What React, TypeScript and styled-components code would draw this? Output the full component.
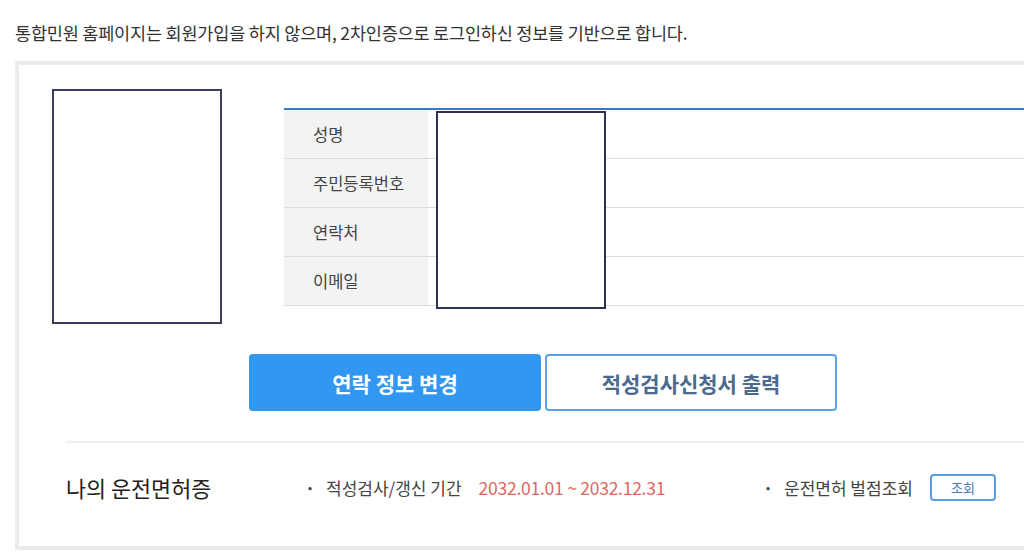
import styled, { createGlobalStyle } from 'styled-components'

const GlobalStyle = createGlobalStyle`
  html, body {
    margin: 0;
    padding: 0;
    background: #ffffff;
    font-family: 'Noto Sans CJK KR', 'Noto Sans', sans-serif;
  }
`

const rows = ['성명', '주민등록번호', '연락처', '이메일']

export default function App() {
  return (
    <>
      <GlobalStyle />
      <Page>
        <Notice>
          통합민원 홈페이지는 회원가입을 하지 않으며, 2차인증으로 로그인하신 정보를 기반으로 합니다.
        </Notice>
        <Card>
          <TopRow>
            <Photo />
            <InfoTable>
              {rows.map((label) => (
                <Row key={label}>
                  <Label>{label}</Label>
                  <Value />
                </Row>
              ))}
              <Redaction />
            </InfoTable>
          </TopRow>
          <Buttons>
            <Button primary>연락 정보 변경</Button>
            <Button>적성검사신청서 출력</Button>
          </Buttons>
          <License>
            <LicenseTitle>나의 운전면허증</LicenseTitle>
            <Item width={458}>
              <Dot>·</Dot>
              적성검사/갱신 기간
              <Period>2032.01.01 ~ 2032.12.31</Period>
            </Item>
            <Item>
              <Dot>·</Dot>
              운전면허 벌점조회
              <SmallButton>조회</SmallButton>
            </Item>
          </License>
        </Card>
      </Page>
    </>
  )
}

const Page = styled.div`
  width: 1024px;
  height: 556px;
  overflow: hidden;
  padding-left: 15px;
  box-sizing: border-box;
`

const Notice = styled.p`
  margin: 0;
  padding-top: 21px;
  height: 61px;
  box-sizing: border-box;
  font-size: 17.5px;
  line-height: 24px;
  color: #333333;
  letter-spacing: -0.2px;
`

const Card = styled.div`
  width: 1060px;
  height: 489px;
  box-sizing: border-box;
  border: 4px solid #ececec;
  display: flex;
  flex-direction: column;
`

const TopRow = styled.div`
  display: flex;
  align-items: flex-start;
  padding: 24px 0 0 33px;
  gap: 62px;
`

const Photo = styled.div`
  width: 170px;
  height: 235px;
  box-sizing: border-box;
  border: 2px solid #3a3d5c;
  background: #ffffff;
`

const InfoTable = styled.div`
  position: relative;
  flex: 1;
  margin-top: 19px;
  border-top: 2px solid #3a78c4;
`

const Row = styled.div`
  display: flex;
  height: 49px;
  border-bottom: 1px solid #dcdcdc;
  box-sizing: border-box;
`

const Label = styled.div`
  width: 144px;
  background: #f3f3f3;
  display: flex;
  align-items: center;
  padding-left: 29px;
  box-sizing: border-box;
  font-size: 16.5px;
  color: #444444;
`

const Value = styled.div`
  flex: 1;
  background: #ffffff;
`

const Redaction = styled.div`
  position: absolute;
  left: 152px;
  top: 1px;
  width: 170px;
  height: 198px;
  box-sizing: border-box;
  border: 2px solid #2c3252;
  background: #ffffff;
`

const Buttons = styled.div`
  display: flex;
  gap: 4px;
  margin: 30px 0 0 230px;
`

const Button = styled.button<{ primary?: boolean }>`
  width: 292px;
  height: 57px;
  border-radius: 4px;
  box-sizing: border-box;
  font-family: inherit;
  font-size: 21px;
  font-weight: 700;
  cursor: pointer;
  border: 2px solid ${({ primary }) => (primary ? '#3197f1' : '#5ca0e6')};
  background: ${({ primary }) => (primary ? '#3197f1' : '#ffffff')};
  color: ${({ primary }) => (primary ? '#ffffff' : '#4a6a8e')};
`

const License = styled.div`
  display: flex;
  align-items: center;
  margin: 30px 0 0 47px;
  border-top: 2px solid #f0f0f0;
  padding: 29px 0 0 0;
  height: 30px;
  box-sizing: content-box;
`

const LicenseTitle = styled.div`
  width: 244px;
  font-size: 21.8px;
  color: #222222;
`

const Item = styled.div<{ width?: number }>`
  display: flex;
  align-items: center;
  width: ${({ width }) => (width ? `${width}px` : 'auto')};
  font-size: 17px;
  color: #444444;
`

const Dot = styled.span`
  width: 18px;
  margin-left: -5px;
  padding-right: 3px;
  font-size: 17px;
  font-weight: 700;
  color: #444444;
`

const Period = styled.span`
  margin-left: 17px;
  font-size: 17.6px;
  color: #e0675c;
  letter-spacing: -0.3px;
`

const SmallButton = styled.button`
  margin-left: 17px;
  width: 66px;
  height: 27px;
  border: 2px solid #5b9be0;
  border-radius: 4px;
  background: #ffffff;
  font-family: inherit;
  font-size: 13px;
  color: #4a78b5;
  cursor: pointer;
`
